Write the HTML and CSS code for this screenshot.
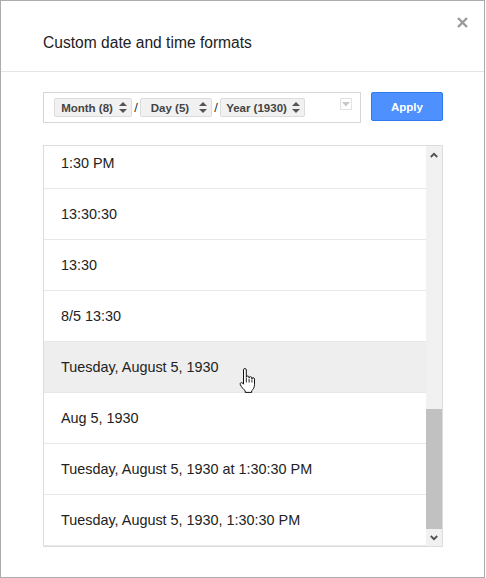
FILE: index.html
```html
<!DOCTYPE html>
<html lang="en">
<head>
    <meta charset="UTF-8">
    <title>Custom date and time formats</title>
    <link rel="stylesheet" href="styles.css">
</head>
<body>
    <div class="dialog">
        <div class="dialog-header">
            <span class="dialog-title">Custom date and time formats</span>
            <span class="close-btn">
                <svg width="11" height="11" viewBox="0 0 11 11"><path d="M1 1L10 10M10 1L1 10" stroke="#9a9a9a" stroke-width="2.4"/></svg>
            </span>
        </div>

        <div class="dialog-body">
            <div class="format-row">
                <div class="format-input">
                    <span class="chip chip-month">
                        <span class="chip-label">Month (8)</span>
                        <svg class="spinner" width="8" height="11" viewBox="0 0 8 11"><path d="M4 0L8 4H0Z M4 11L0 7H8Z" fill="#555"/></svg>
                    </span>
                    <span class="sep">/</span>
                    <span class="chip chip-day">
                        <span class="chip-label">Day (5)</span>
                        <svg class="spinner" width="8" height="11" viewBox="0 0 8 11"><path d="M4 0L8 4H0Z M4 11L0 7H8Z" fill="#555"/></svg>
                    </span>
                    <span class="sep">/</span>
                    <span class="chip chip-year">
                        <span class="chip-label">Year (1930)</span>
                        <svg class="spinner" width="8" height="11" viewBox="0 0 8 11"><path d="M4 0L8 4H0Z M4 11L0 7H8Z" fill="#555"/></svg>
                    </span>
                    <span class="more-btn">
                        <svg width="8" height="5" viewBox="0 0 8 5"><path d="M0 0H8L4 4.5Z" fill="#c8c8c8"/></svg>
                    </span>
                </div>
                <button class="apply-btn">Apply</button>
            </div>

            <div class="format-list">
                <ul class="format-items">
                    <li>1:30 PM</li>
                    <li>13:30:30</li>
                    <li>13:30</li>
                    <li>8/5 13:30</li>
                    <li class="hover">Tuesday, August 5, 1930</li>
                    <li>Aug 5, 1930</li>
                    <li>Tuesday, August 5, 1930 at 1:30:30 PM</li>
                    <li>Tuesday, August 5, 1930, 1:30:30 PM</li>
                </ul>
                <div class="scrollbar">
                    <div class="scroll-arrow">
                        <svg width="8" height="6" viewBox="0 0 8 6"><path d="M0.8 5L4 1.8L7.2 5" fill="none" stroke="#505050" stroke-width="1.8"/></svg>
                    </div>
                    <div class="scroll-track">
                        <div class="scroll-thumb"></div>
                    </div>
                    <div class="scroll-arrow">
                        <svg width="8" height="6" viewBox="0 0 8 6"><path d="M0.8 1L4 4.2L7.2 1" fill="none" stroke="#505050" stroke-width="1.8"/></svg>
                    </div>
                </div>
            </div>
        </div>

        <svg class="hand-cursor" width="20" height="26" viewBox="0 0 20 26">
            <path d="M6.5 1.9c0-.8.6-1.4 1.4-1.4s1.4.6 1.4 1.4v7.4c0-.8.6-1.3 1.4-1.3s1.4.6 1.4 1.4v.6c0-.8.6-1.3 1.4-1.3s1.4.6 1.4 1.4v.8c0-.8.6-1.2 1.3-1.2s1.3.6 1.3 1.4v5.4c0 3-1.3 5-2.8 6.2v1.7H8.2v-1.7c-1.5-1-3.6-3.6-4.8-5.8-.6-1.2 0-2.3 1-2.3.7 0 1.3.5 2.1 1.6z" fill="#fff" stroke="#111" stroke-width="1" stroke-linejoin="round"/>
            <path d="M9.3 10v4.5M12.1 10.7v3.8M14.9 11.4v3.1" stroke="#111" stroke-width="0.9"/>
        </svg>
    </div>
</body>
</html>
```

FILE: styles.css
```css
body {
    margin: 0;
    background-color: #fff;
    font-family: Arial, "Liberation Sans", sans-serif;
}

.dialog {
    position: relative;
    box-sizing: border-box;
    width: 485px;
    height: 578px;
    border: 1px solid #acacac;
    background-color: #fff;
}

.dialog-header {
    display: flex;
    justify-content: space-between;
    align-items: flex-start;
    height: 70px;
    padding: 0 16px 0 42px;
    border-bottom: 1px solid #e5e5e5;
}

.dialog-title {
    padding-top: 33px;
    font-size: 15.6px;
    color: #222;
}

.close-btn {
    margin-top: 16px;
    line-height: 0;
}

.dialog-body {
    padding: 20px 41px 0 42px;
}

.format-row {
    display: flex;
    align-items: flex-start;
    gap: 10px;
}

.format-input {
    box-sizing: border-box;
    display: flex;
    align-items: flex-start;
    width: 318px;
    height: 31px;
    padding: 5px 8px 5px 10px;
    border: 1px solid #d6d6d6;
}

.chip {
    box-sizing: border-box;
    display: flex;
    align-items: center;
    height: 19px;
    padding-right: 4px;
    border: 1px solid #dcdcdc;
    border-radius: 2px;
    background-color: #f1f1f1;
}

.chip-month {
    width: 78px;
}

.chip-day {
    width: 72px;
}

.chip-year {
    width: 85px;
}

.chip-label {
    flex: 1;
    text-align: center;
    font-size: 11.5px;
    font-weight: bold;
    color: #444;
}

.sep {
    width: 8px;
    text-align: center;
    font-size: 13px;
    line-height: 19px;
    color: #333;
}

.more-btn {
    box-sizing: border-box;
    display: flex;
    align-items: center;
    justify-content: center;
    width: 12px;
    height: 12px;
    margin-left: auto;
    border: 1px solid #e2e2e2;
}

.apply-btn {
    box-sizing: border-box;
    width: 72px;
    height: 29px;
    padding: 0;
    border: 1px solid #3079ed;
    border-radius: 2px;
    background-color: #4d90fe;
    color: #fff;
    font-family: Arial, "Liberation Sans", sans-serif;
    font-size: 11.5px;
    font-weight: bold;
}

.format-list {
    box-sizing: border-box;
    display: flex;
    height: 402px;
    margin-top: 22px;
    border: 1px solid #dcdcdc;
}

.format-items {
    flex: 1;
    margin: -8px 0 0;
    padding: 0;
    list-style: none;
}

.format-items li {
    display: flex;
    align-items: center;
    height: 50px;
    padding-left: 17px;
    border-bottom: 1px solid #e8e8e8;
    font-size: 14.4px;
    color: #222;
}

.format-items li.hover {
    background-color: #eee;
}

.scrollbar {
    display: flex;
    flex-direction: column;
    width: 16px;
    background-color: #f1f1f1;
}

.scroll-arrow {
    display: flex;
    align-items: center;
    justify-content: center;
    height: 17px;
}

.scroll-track {
    flex: 1;
    display: flex;
    flex-direction: column;
    justify-content: flex-end;
}

.scroll-thumb {
    height: 120px;
    background-color: #c1c1c1;
}

.hand-cursor {
    position: absolute;
    left: 236px;
    top: 367px;
}
```
